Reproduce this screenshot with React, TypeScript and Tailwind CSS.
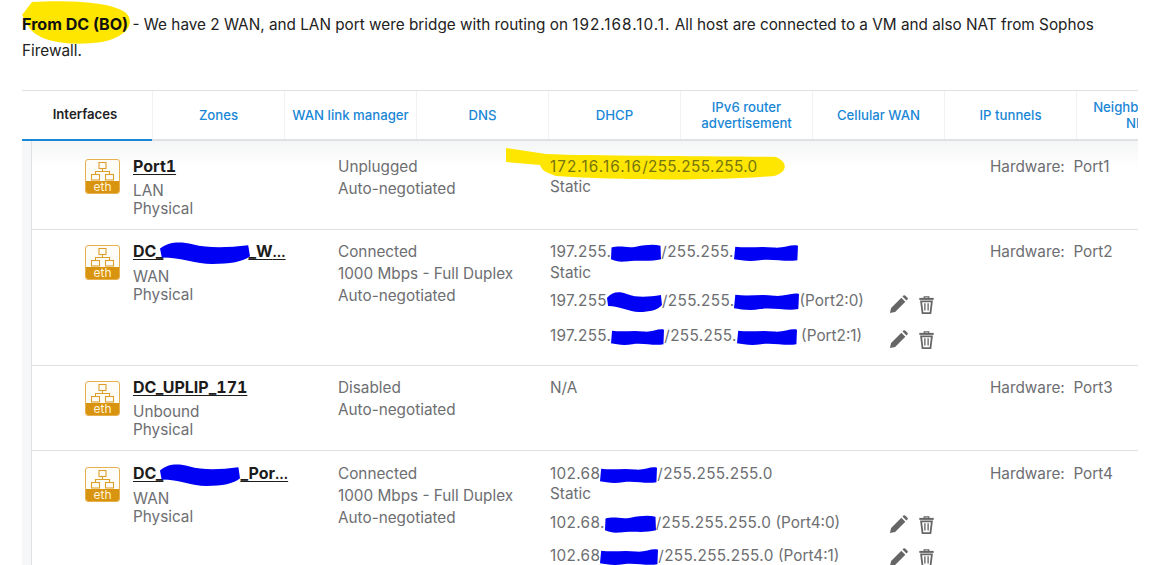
import React from "react";

const BLUE = "#0000f5";

const BLOBS = [
  "M1 4 C20 1 30 5 50 3 S85 0 99 2 L100 17 C80 20 60 18 40 19 S12 20 0 17 Z",
  "M0 6 C8 0 22 -1 36 2 C55 6 75 5 98 3 L100 13 C92 18 78 20 58 20 C40 20 24 14 2 14 Z",
  "M2 3 C24 5 40 2 62 4 C78 5 90 0 100 2 L99 18 C80 20 60 16 40 18 C24 20 10 18 0 17 Z",
];

function EthIcon() {
  return (
    <div className="w-[35px] h-[35px] rounded-[3px] border border-[#e6b04f] bg-[#fffdf8] flex flex-col overflow-hidden shrink-0">
      <svg viewBox="0 0 33 21" className="w-[33px] h-[21px]" fill="none" stroke="#dd9f2c" strokeWidth="1.1">
        <rect x="13" y="2.5" width="7" height="6" />
        <path d="M16.5 8.5v3M9.5 14.5v-3h14v3" />
        <rect x="5.5" y="14.5" width="8" height="5.5" />
        <rect x="19.5" y="14.5" width="8" height="5.5" />
      </svg>
      <div className="flex-1 bg-[#d9940f] text-[#fff3dc] text-[12px] leading-[12px] text-center">eth</div>
    </div>
  );
}

function Actions() {
  return (
    <div className="flex items-center gap-[11px] text-[#666]">
      <svg viewBox="0 0 20 20" className="w-[19px] h-[19px]" fill="currentColor">
        <path d="M1 19l1.2-5.4L13 2.8l4.2 4.2L6.4 17.8 1 19zM14.2 1.6l1-1a1.3 1.3 0 0 1 1.8 0l2.4 2.4a1.3 1.3 0 0 1 0 1.8l-1 1-4.2-4.2z" />
      </svg>
      <svg viewBox="0 0 16 20" className="w-[15px] h-[18px]" fill="none" stroke="currentColor">
        <path d="M0 3.2h16" strokeWidth="2.2" />
        <path d="M5.5 2.5V1h5v1.5" strokeWidth="1.4" />
        <path d="M2 6l1.6 13h8.8L14 6z" strokeWidth="2" />
        <path d="M6.2 8v8M9.8 8v8" strokeWidth="1.5" />
      </svg>
    </div>
  );
}

function Blot({ w, h = 18, v = 0, ml = 0, mr = 0 }: { w: number; h?: number; v?: number; ml?: number; mr?: number }) {
  return (
    <span
      className="inline-block align-middle relative"
      style={{ width: w, height: 14, marginLeft: ml, marginRight: mr }}
    >
      <svg
        viewBox="0 0 100 20"
        preserveAspectRatio="none"
        className="absolute left-0 overflow-visible"
        style={{ width: w, height: h, top: (14 - h) / 2 }}
      >
        <path d={BLOBS[v]} fill={BLUE} />
      </svg>
    </span>
  );
}

function Row({
  height,
  pt,
  iconPt,
  name,
  kind,
  status,
  hw,
  children,
  first,
}: {
  height: number;
  pt: number;
  iconPt: number;
  name: React.ReactNode;
  kind: string;
  status: string[];
  hw: string;
  children: React.ReactNode;
  first?: boolean;
}) {
  return (
    <div
      className={
        "flex border-b border-[#dfe2e4] pl-[53px] " +
        (first ? "bg-gradient-to-b from-[#f4f5f6] to-white to-[30%]" : "bg-white")
      }
      style={{ height }}
    >
      <div className="w-[48px] shrink-0" style={{ paddingTop: iconPt }}>
        <EthIcon />
      </div>
      <div className="w-[205px] shrink-0" style={{ paddingTop: pt }}>
        <div className="font-bold text-[16px] tabular-nums text-[#1c1c1c] underline underline-offset-2 whitespace-nowrap leading-[20px]">{name}</div>
        <div className="mt-[6px] leading-[18px]">{kind}</div>
        <div className="leading-[18.5px]">Physical</div>
      </div>
      <div className="w-[212px] shrink-0 leading-[22px]" style={{ paddingTop: pt }}>
        {status.map((s) => (
          <div key={s}>{s}</div>
        ))}
      </div>
      <div className="w-[440px] shrink-0" style={{ paddingTop: pt }}>{children}</div>
      <div className="leading-[22px] whitespace-nowrap" style={{ paddingTop: pt }}>
        Hardware:&nbsp; {hw}
      </div>
    </div>
  );
}

function Extra({ children, mt, ap = 5 }: { children: React.ReactNode; mt: number; ap?: number }) {
  return (
    <div className="flex" style={{ marginTop: mt }}>
      <div className="w-[339px] whitespace-nowrap leading-[22px] shrink-0">{children}</div>
      <div style={{ paddingTop: ap }}>
        <Actions />
      </div>
    </div>
  );
}

function Ip({ children }: { children: React.ReactNode }) {
  return <span className="tracking-[0.35px]">{children}</span>;
}

const tabs: React.ReactNode[] = [
  "Zones",
  "WAN link manager",
  "DNS",
  "DHCP",
  <>IPv6 router<br />advertisement</>,
  "Cellular WAN",
  "IP tunnels",
  <>Neighbor (ARP-<br />NDP)</>,
];

export default function App() {
  return (
    <div
      className="w-[1155px] h-[565px] overflow-hidden bg-white relative text-[15.3px] text-[#6d6e71]"
      style={{ fontFamily: "Inter, 'Noto Sans', sans-serif" }}
    >
      <div className="pl-[22px] pr-[40px] pt-[11px] h-[90px]">
        <p className="text-[15.3px] leading-[26px] text-[#222] relative">
          <svg viewBox="0 0 110 44" className="absolute left-0 top-[-10px] w-[110px] h-[44px] z-0">
            <path d="M10 1 C40 -1 90 0 104 12 C114 22 104 36 80 41 C50 45 20 42 8 28 L0 14 Z" fill="#ffe600" />
          </svg>
          <span className="relative font-bold text-[#111] text-[16.1px]">From DC (BO)</span>
          <span className="relative"> - We have 2 WAN, and LAN port were bridge with routing on <span className="tracking-[1px]">192.168.10.1.</span> All host are connected to a VM and also NAT from Sophos Firewall.</span>
        </p>
      </div>

      <div className="ml-[22px] w-[1116px] h-[475px] overflow-hidden">
        <div className="flex h-[51px] border-t border-b-2 border-t-[#dfe2e4] border-b-[#dfe2e4] w-[1200px]">
          <div className="w-[130px] h-[50px] border-b-2 border-[#1a87d6] text-[13.2px] font-semibold text-[#222] flex items-center justify-center pb-[1px] pr-[4px]">
            Interfaces
          </div>
          {tabs.map((t, i) => (
            <div
              key={i}
              className="w-[132px] border-l border-[#f1f2f3] text-[13.2px] leading-[16px] font-medium text-[#1a87d6] flex items-center justify-center text-center whitespace-nowrap"
            >
              {t}
            </div>
          ))}
        </div>

        <div className="pl-[9px] bg-[#f6f7f8]">
          <div className="border-l border-[#dfe2e4] bg-white">
            <Row first height={89} pt={15} iconPt={18} name="Port1" kind="LAN" status={["Unplugged", "Auto-negotiated"]} hw="Port1">
              <div className="relative leading-[20px] text-[#75750f] mt-[1px]">
                <svg viewBox="0 0 280 34" className="absolute left-[-44px] top-[-9px] w-[280px] h-[34px]">
                  <path d="M0 0 L40 6 C90 8 200 8 270 9 C282 14 282 24 268 28 C200 33 110 32 50 28 C38 24 36 22 34 17 L0 14 Z" fill="#ffe600" />
                </svg>
                <span className="relative"><span className="tracking-[1.05px]">172.16.16.16</span><Ip>/255.255.255.0</Ip></span>
              </div>
              <div className="leading-[20px]">Static</div>
            </Row>
            <Row
              height={136}
              pt={11}
              iconPt={15}
              name={<>DC_<Blot w={90} h={22} v={1} ml={-3} mr={-2} />_W<span className="text-[13px]">…</span></>}
              kind="WAN"
              status={["Connected", "1000 Mbps - Full Duplex", "Auto-negotiated"]}
              hw="Port2"
            >
              <div className="leading-[22px] whitespace-nowrap"><Ip>197.255.</Ip><Blot w={50} /><Ip>/255.255.</Ip><Blot w={64} v={2} /></div>
              <div className="leading-[20px]">Static</div>
              <Extra mt={7}><Ip>197.255</Ip><Blot w={55} h={20} v={1} /><Ip>/255.255.</Ip><Blot w={65} h={19} v={2} />(Port2:0)</Extra>
              <Extra mt={11}><Ip>197.255.</Ip><Blot w={53} v={2} /><Ip>/255.255.</Ip><Blot w={60} v={2} /> (Port2:1)</Extra>
            </Row>
            <Row height={85} pt={11} iconPt={15} name="DC_UPLIP_171" kind="Unbound" status={["Disabled", "Auto-negotiated"]} hw="Port3">
              <div className="leading-[22px]">N/A</div>
            </Row>
            <Row
              height={130}
              pt={12}
              iconPt={16}
              name={<>DC_<Blot w={80} h={22} v={1} ml={-3} />_Por<span className="text-[13px]">…</span></>}
              kind="WAN"
              status={["Connected", "1000 Mbps - Full Duplex", "Auto-negotiated"]}
              hw="Port4"
            >
              <div className="leading-[21px] whitespace-nowrap"><Ip>102.68</Ip><Blot w={57} v={2} /><Ip>/255.255.255.0</Ip></div>
              <div className="leading-[20px]">Static</div>
              <Extra mt={8} ap={3}><Ip>102.68.</Ip><Blot w={51} /><Ip>/255.255.255.0</Ip> (Port4:0)</Extra>
              <Extra mt={11} ap={3}><Ip>102.68</Ip><Blot w={58} v={2} /><Ip>/255.255.255.0</Ip> (Port4:1)</Extra>
            </Row>
          </div>
        </div>
      </div>
    </div>
  );
}
